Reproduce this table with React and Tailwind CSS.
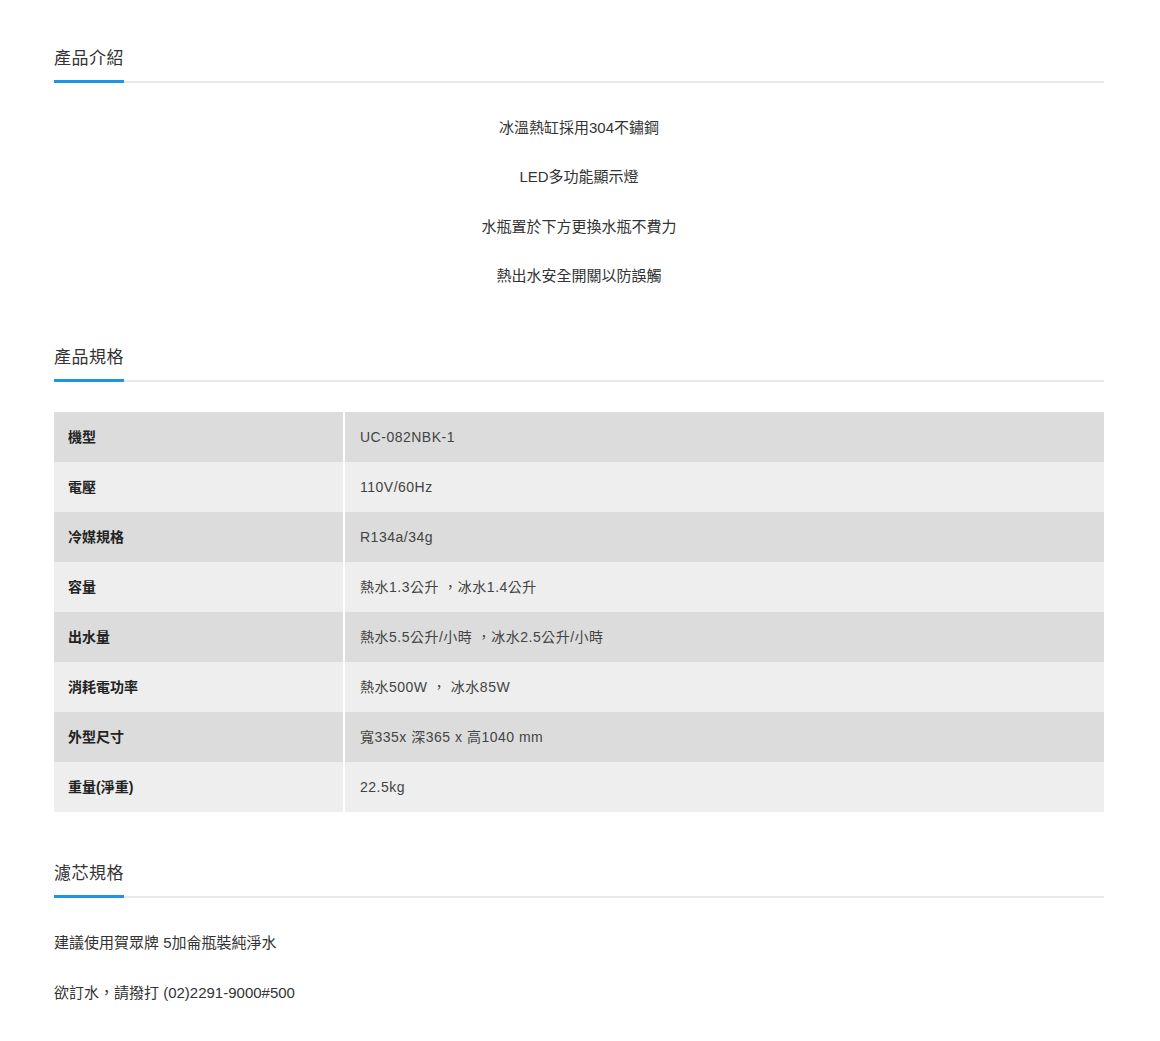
import React from "react";

const features = [
  "冰溫熱缸採用304不鏽鋼",
  "LED多功能顯示燈",
  "水瓶置於下方更換水瓶不費力",
  "熱出水安全開關以防誤觸",
];

const specs = [
  { label: "機型", value: "UC-082NBK-1" },
  { label: "電壓", value: "110V/60Hz" },
  { label: "冷媒規格", value: "R134a/34g" },
  { label: "容量", value: "熱水1.3公升 ，冰水1.4公升" },
  { label: "出水量", value: "熱水5.5公升/小時 ，冰水2.5公升/小時" },
  { label: "消耗電功率", value: "熱水500W ， 冰水85W" },
  { label: "外型尺寸", value: "寬335x 深365 x 高1040 mm" },
  { label: "重量(淨重)", value: "22.5kg" },
];

function SectionTitle({ children }) {
  return (
    <div className="border-b-2 border-[#e9e9e9] flex">
      <h2 className="text-[17px] leading-[24px] text-[#333] pt-[2px] pb-[9px] border-b-[3px] border-[#1b95e6] -mb-[2px] tracking-[0.5px]">
        {children}
      </h2>
    </div>
  );
}

export default function App() {
  return (
    <div
      className="w-full bg-white text-[#333]"
      style={{ fontFamily: '"Liberation Sans", "Noto Sans CJK TC", sans-serif' }}
    >
      <div className="ml-[54px] w-[1050px] pt-[45px] pb-[38px]">
        {/* 產品介紹 */}
        <SectionTitle>產品介紹</SectionTitle>
        <div className="mt-[32px] flex flex-col items-center gap-[24.3px]">
          {features.map((f) => (
            <p key={f} className="text-[15px] leading-[25px] text-[#333]">
              {f}
            </p>
          ))}
        </div>

        {/* 產品規格 */}
        <div className="mt-[56px]">
          <SectionTitle>產品規格</SectionTitle>
        </div>
        <div className="mt-[30px] grid grid-cols-[289px_1fr] gap-x-[2px]">
          {specs.map((s, i) => (
            <React.Fragment key={s.label}>
              <div
                className={`h-[50px] flex items-center pl-[14px] pt-[2px] text-[14px] font-bold text-[#222] ${
                  i % 2 === 0 ? "bg-[#dcdcdc]" : "bg-[#eeeeee]"
                }`}
              >
                {s.label}
              </div>
              <div
                className={`h-[50px] flex items-center pl-[15px] pt-[2px] text-[14px] text-[#444] tracking-[0.5px] ${
                  i % 2 === 0 ? "bg-[#dcdcdc]" : "bg-[#eeeeee]"
                }`}
              >
                {s.value}
              </div>
            </React.Fragment>
          ))}
        </div>

        {/* 濾芯規格 */}
        <div className="mt-[48px]">
          <SectionTitle>濾芯規格</SectionTitle>
        </div>
        <div className="mt-[32px] flex flex-col gap-[25px]">
          <p className="text-[15px] leading-[25px] text-[#333]">建議使用賀眾牌 5加侖瓶裝純淨水</p>
          <p className="text-[15px] leading-[25px] text-[#333]">欲訂水，請撥打 (02)2291-9000#500</p>
        </div>
      </div>
    </div>
  );
}
